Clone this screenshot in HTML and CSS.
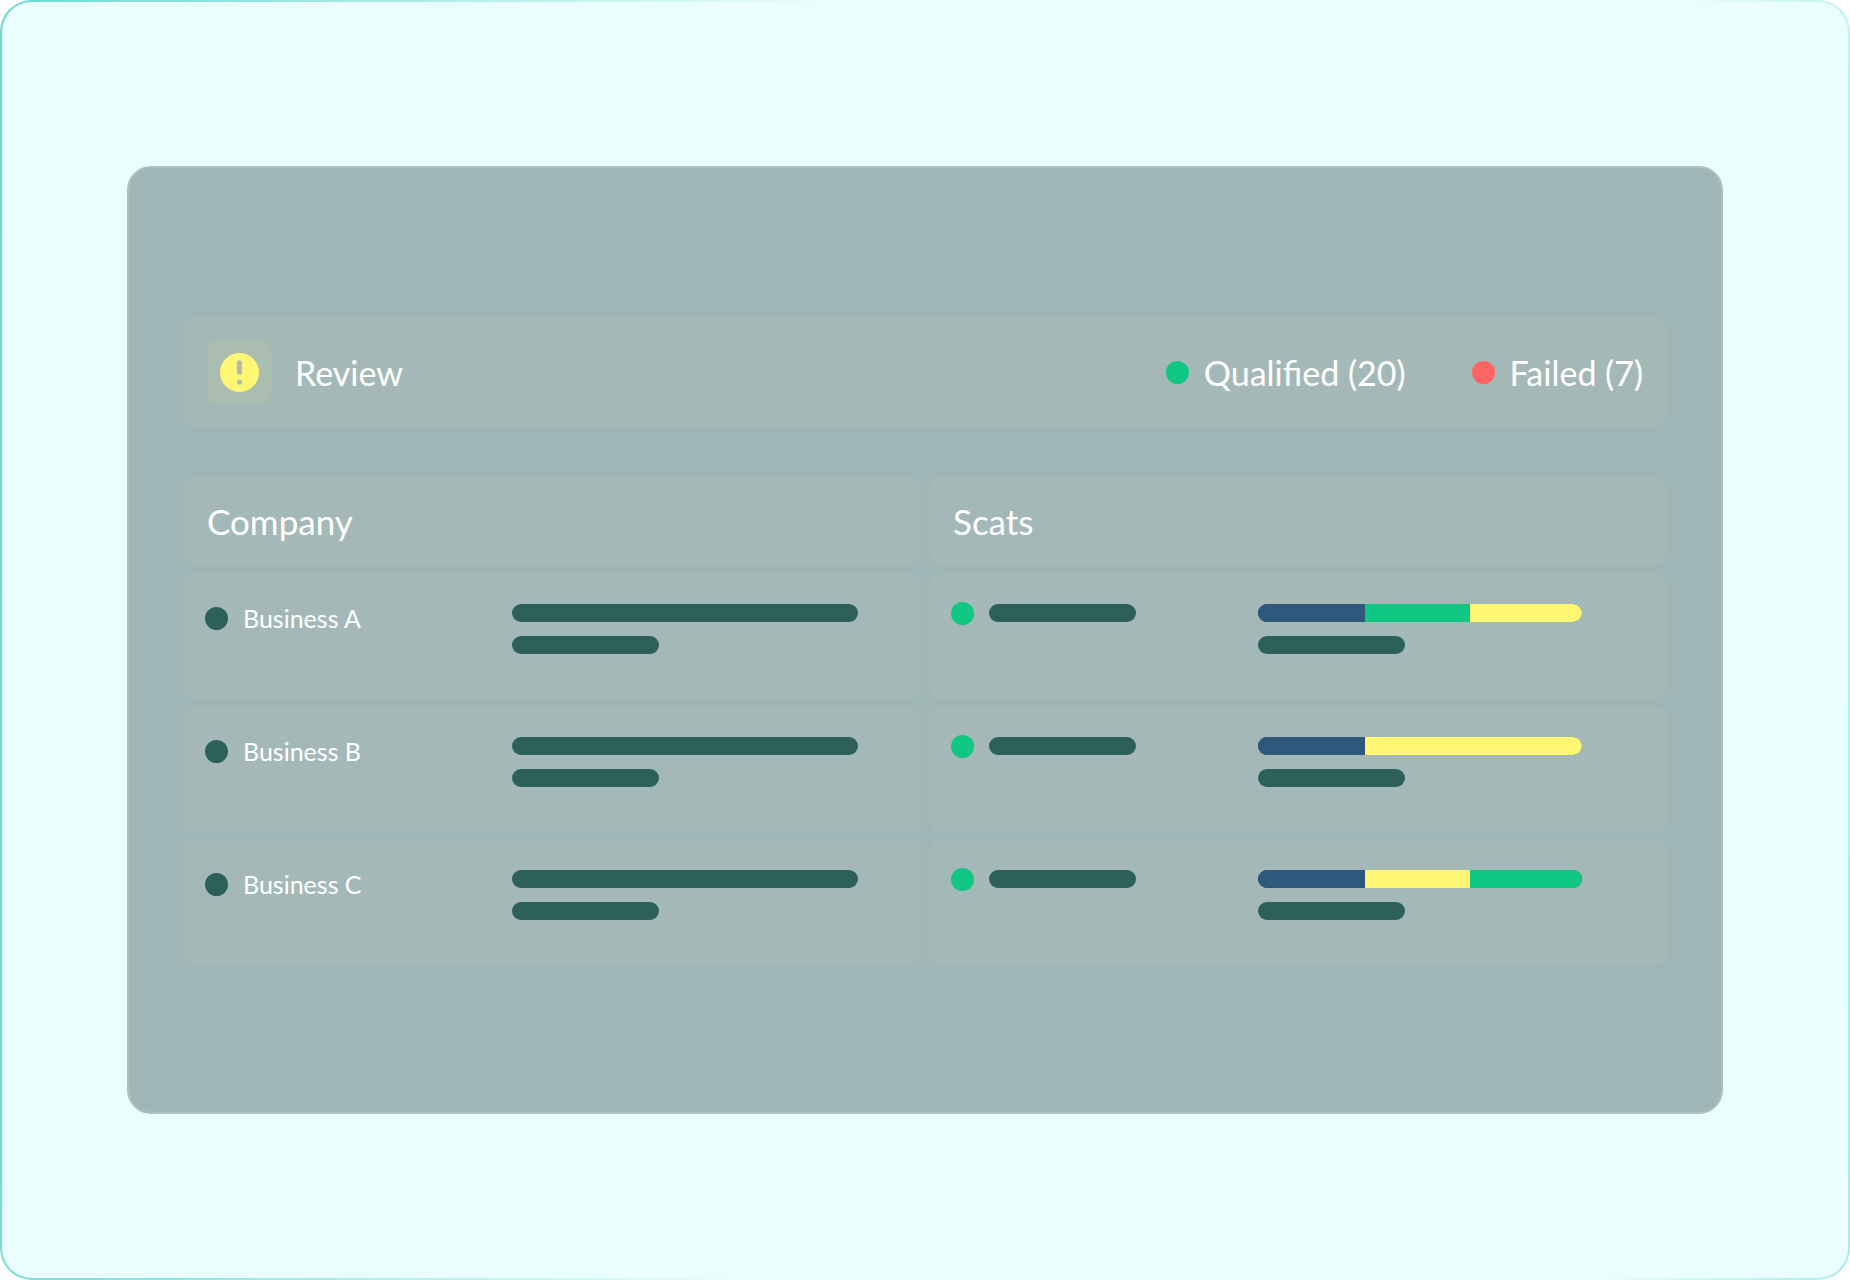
FILE: index.html
```html
<!DOCTYPE html>
<html lang="en">
<head>
  <meta charset="UTF-8">
  <meta name="viewport" content="width=device-width, initial-scale=1.0">
  <title>Review</title>
  <link rel="stylesheet" href="styles.css">
</head>
<body>
  <main class="frame">
    <section class="panel">

      <header class="summary">
        <div class="summary-icon">
          <svg viewBox="0 0 39 39" width="39" height="39" aria-hidden="true">
            <path fill="#fff773" fill-rule="evenodd" d="M19.500 0a19.500 19.500 0 1 1 0 39a19.500 19.500 0 0 1 0-39zM19.500 7.200a2.600 2.600 0 0 0-2.600 2.600v9.400a2.600 2.600 0 0 0 5.200 0v-9.400a2.600 2.600 0 0 0-2.600-2.600zM19.500 26.400a2.600 2.600 0 1 0 0 5.200a2.600 2.600 0 0 0 0-5.200z"/>
          </svg>
        </div>
        <h1>Review</h1>
        <ul class="legend">
          <li><span class="dot green"></span>Qualified (20)</li>
          <li><span class="dot red"></span>Failed (7)</li>
        </ul>
      </header>

      <table class="results">
        <thead>
          <tr>
            <th scope="col">Company</th>
            <th scope="col">Scats</th>
          </tr>
        </thead>
        <tbody>
          <tr>
            <td>
              <div class="cell">
                <div class="name"><span class="dot"></span>Business A</div>
                <div class="bars">
                  <div class="bar long"></div>
                  <div class="bar"></div>
                </div>
              </div>
            </td>
            <td>
              <div class="cell">
                <div class="status"><span class="dot green"></span><div class="bar"></div></div>
                <div class="bars">
                  <div class="bar split"><i class="blue"></i><i class="green"></i><i class="yellow"></i></div>
                  <div class="bar"></div>
                </div>
              </div>
            </td>
          </tr>
          <tr>
            <td>
              <div class="cell">
                <div class="name"><span class="dot"></span>Business B</div>
                <div class="bars">
                  <div class="bar long"></div>
                  <div class="bar"></div>
                </div>
              </div>
            </td>
            <td>
              <div class="cell">
                <div class="status"><span class="dot green"></span><div class="bar"></div></div>
                <div class="bars">
                  <div class="bar split"><i class="blue"></i><i class="yellow"></i><i class="yellow"></i></div>
                  <div class="bar"></div>
                </div>
              </div>
            </td>
          </tr>
          <tr>
            <td>
              <div class="cell">
                <div class="name"><span class="dot"></span>Business C</div>
                <div class="bars">
                  <div class="bar long"></div>
                  <div class="bar"></div>
                </div>
              </div>
            </td>
            <td>
              <div class="cell">
                <div class="status"><span class="dot green"></span><div class="bar"></div></div>
                <div class="bars">
                  <div class="bar split"><i class="blue"></i><i class="yellow"></i><i class="green"></i></div>
                  <div class="bar"></div>
                </div>
              </div>
            </td>
          </tr>
        </tbody>
      </table>

    </section>
  </main>
</body>
</html>
```
FILE: styles.css
```css
* {
  box-sizing: border-box;
}

body {
  margin: 0;
  background-color: #fff;
  color: #fff;
  font-family: Lato, "Open Sans", sans-serif;
  font-size: 34px;
}

.frame {
  min-height: 100vh;
  padding: 48px 125px;
  display: flex;
  align-items: center;
  border: 2px solid transparent;
  border-radius: 32px;
  background: linear-gradient(#eafefe, #eafefe) padding-box,
    linear-gradient(94deg, #6bd9d0, #eafefe 43%, #eafefe 87%, #a9ece7) border-box;
}

.panel {
  flex: 1;
  padding: 148px 54px 147px;
  border: 2px solid #adc2c0;
  border-radius: 24px;
  background-color: #9fb6b7;
}

.summary {
  display: flex;
  align-items: center;
  height: 112px;
  padding: 0 24px;
  border-radius: 16px;
  background-color: #a4b9b7;
}

.summary-icon {
  display: flex;
  align-items: center;
  justify-content: center;
  width: 64px;
  height: 64px;
  margin-right: 24px;
  border-radius: 12px;
  background-color: #a9beb0;
}

h1 {
  margin: 0;
  font-size: 34px;
  font-weight: 400;
}

.legend {
  display: flex;
  gap: 66px;
  margin: 0 0 0 auto;
  padding: 0;
  list-style: none;
}

.legend li {
  display: flex;
  align-items: center;
  gap: 15px;
}

.dot {
  flex: none;
  width: 23px;
  height: 23px;
  border-radius: 50%;
  background-color: #2d5f5b;
}

.results {
  width: calc(100% + 16px);
  margin: 40px -8px -8px;
  border-spacing: 8px;
  table-layout: fixed;
}

th {
  height: 90px;
  padding: 0 24px;
  border-radius: 16px;
  background-color: #a4b9b7;
  font-size: 35px;
  font-weight: 400;
  text-align: left;
}

td {
  height: 125px;
  padding: 30px 22px;
  border-radius: 12px;
  background-color: #a4b9b7;
  vertical-align: top;
}

.cell {
  display: grid;
  grid-template-columns: 307px 1fr;
  align-items: start;
}

.name {
  display: flex;
  align-items: center;
  gap: 15px;
  font-size: 25px;
  line-height: 28px;
}

.status {
  display: flex;
  align-items: center;
  gap: 15px;
  height: 18px;
}

.bars {
  display: grid;
  gap: 14px;
}

.bar {
  width: 147px;
  height: 18px;
  border-radius: 9px;
  background-color: #2d5f5b;
}

.long {
  width: 346px;
}

.split {
  display: grid;
  grid-template-columns: 107px 105px 112px;
  width: 324px;
  overflow: hidden;
}

.green {
  background-color: #10c683;
}

.red {
  background-color: #ff6464;
}

.blue {
  background-color: #30587c;
}

.yellow {
  background-color: #fff773;
}
```
